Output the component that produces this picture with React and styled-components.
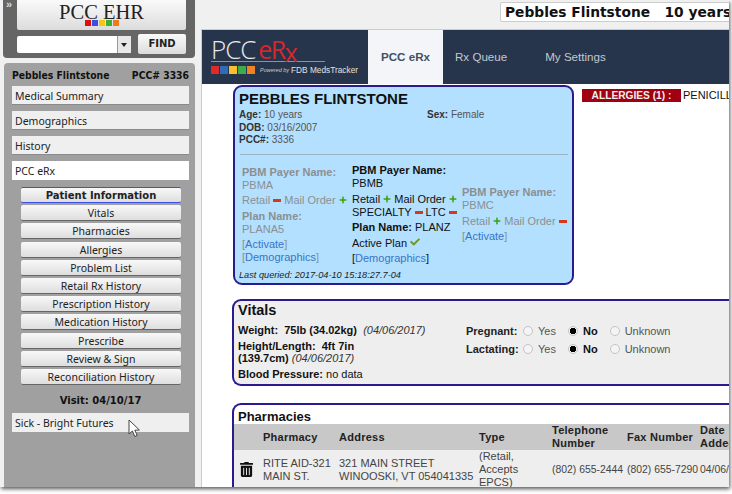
import React from 'react';
import styled, { createGlobalStyle } from 'styled-components';
import { FaTrashAlt, FaPlus, FaCheck } from 'react-icons/fa';

const GlobalStyle = createGlobalStyle`
  html, body { margin: 0; padding: 0; background: #fff; }
  body { width: 732px; height: 494px; overflow: hidden; font-family: "Liberation Sans", Arial, sans-serif; }
`;

const sideMenu = ['Medical Summary', 'Demographics', 'History', 'PCC eRx'];
const subMenu = ['Patient Information', 'Vitals', 'Pharmacies', 'Allergies', 'Problem List', 'Retail Rx History', 'Prescription History', 'Medication History', 'Prescribe', 'Review & Sign', 'Reconciliation History'];
const logoColors = ['#e01010', '#3a4fe0', '#f5c518', '#3cae3c', '#ee7a1c'];
const erxColors = ['#e02a26', '#2f6cb5', '#f7c12d', '#3dab49', '#ef8323'];

function Plus() {
  return <PlusIcon><FaPlus /></PlusIcon>;
}

function Sign({ on }) {
  return on ? <Plus /> : <Minus />;
}

function Radio({ label, checked }) {
  return (
    <RadioItem $checked={checked}>
      <RadioDot $checked={checked} />
      {label}
    </RadioItem>
  );
}

function Cursor() {
  return (
    <CursorMark width="13" height="19" viewBox="0 0 13 19">
      <path d="M1 1 L1 15 L4.4 12 L6.8 17.5 L9.2 16.4 L6.8 11.2 L11.4 11 Z" fill="#fff" stroke="#444" strokeWidth="1" />
    </CursorMark>
  );
}

export default function App() {
  return (
    <>
      <GlobalStyle />
      <Window>
        <Sidebar>
          <TopBox>
            <Chevrons>»</Chevrons>
            <LogoButton>
              PCC EHR
              <Squares>
                {logoColors.map((c) => <Square key={c} $color={c} $size={6} />)}
              </Squares>
            </LogoButton>
            <SearchRow>
              <SearchInput>
                <DropButton />
              </SearchInput>
              <FindButton>FIND</FindButton>
            </SearchRow>
          </TopBox>
          <Panel>
            <PanelHead>
              <span>Pebbles Flintstone</span>
              <span>PCC# 3336</span>
            </PanelHead>
            {sideMenu.map((m) => (
              <MenuItem key={m} $active={m === 'PCC eRx'}>{m}</MenuItem>
            ))}
            <SubMenu>
              {subMenu.map((m, i) => (
                <SubButton key={m} $active={i === 0}>{m}</SubButton>
              ))}
            </SubMenu>
            <VisitTitle>Visit: 04/10/17</VisitTitle>
            <VisitItem>
              Sick - Bright Futures
              <Cursor />
            </VisitItem>
          </Panel>
        </Sidebar>
        <Main>
          <TitleRow>
            <TitleBox>Pebbles Flintstone&nbsp;&nbsp;&nbsp;10 years</TitleBox>
          </TitleRow>
          <Frame>
            <Nav>
              <Brand>
                <BrandTop>PCC <BrandRed>eR<BrandX>x</BrandX></BrandRed></BrandTop>
                <BrandRule />
                <BrandBottom>
                  {erxColors.map((c) => <Square key={c} $color={c} $size={8} />)}
                  <Powered>Powered by</Powered>
                  <Fdb>FDB MedsTracker</Fdb>
                </BrandBottom>
              </Brand>
              <Tab $active>PCC eRx</Tab>
              <Tab>Rx Queue</Tab>
              <Tab>My Settings</Tab>
            </Nav>
            <Content>
              <TopRow>
                <PatientCard>
                  <PatientName>PEBBLES FLINTSTONE</PatientName>
                  <InfoGrid>
                    <div>
                      <InfoLine><b>Age:</b> 10 years</InfoLine>
                      <InfoLine><b>DOB:</b> 03/16/2007</InfoLine>
                      <InfoLine><b>PCC#:</b> 3336</InfoLine>
                    </div>
                    <InfoLine><b>Sex:</b> Female</InfoLine>
                  </InfoGrid>
                  <Rule />
                  <Payers>
                    <Payer $muted>
                      <PayerLine><b>PBM Payer Name:</b><br />PBMA</PayerLine>
                      <PayerLine>Retail <Sign /> Mail Order <Sign on /></PayerLine>
                      <PayerLine><b>Plan Name:</b><br />PLANA5</PayerLine>
                      <PayerLine>[<PayerLink>Activate</PayerLink>]<br />[<PayerLink>Demographics</PayerLink>]</PayerLine>
                    </Payer>
                    <Payer>
                      <PayerLine><b>PBM Payer Name:</b><br />PBMB</PayerLine>
                      <PayerLine>Retail <Sign on /> Mail Order <Sign on /><br />SPECIALTY <Sign /> LTC <Sign /></PayerLine>
                      <PayerLine><b>Plan Name:</b> PLANZ</PayerLine>
                      <PayerLine>Active Plan <CheckIcon><FaCheck /></CheckIcon></PayerLine>
                      <PayerLine>[<PayerLink>Demographics</PayerLink>]</PayerLine>
                    </Payer>
                    <Payer $muted>
                      <PayerLine><b>PBM Payer Name:</b><br />PBMC</PayerLine>
                      <PayerLine>Retail <Sign on /> Mail Order <Sign /></PayerLine>
                      <PayerLine>[<PayerLink>Activate</PayerLink>]</PayerLine>
                    </Payer>
                  </Payers>
                  <Queried>Last queried: 2017-04-10 15:18:27.7-04</Queried>
                </PatientCard>
                <AllergyRow>
                  <AllergyTag>ALLERGIES (1) :</AllergyTag>
                  <span>PENICILLIN</span>
                </AllergyRow>
              </TopRow>
              <VitalsCard>
                <CardTitle $size={14.5}>Vitals</CardTitle>
                <VitalsGrid>
                  <div>
                    <VitalLine><b>Weight:&nbsp; 75lb (34.02kg)</b> &nbsp;<i>(04/06/2017)</i></VitalLine>
                    <VitalLine><b>Height/Length:&nbsp; 4ft 7in<br />(139.7cm)</b> <i>(04/06/2017)</i></VitalLine>
                    <VitalLine><b>Blood Pressure:</b> no data</VitalLine>
                  </div>
                  <RadioColumn>
                    {['Pregnant:', 'Lactating:'].map((q) => (
                      <RadioRow key={q}>
                        <RadioLabel>{q}</RadioLabel>
                        <Radio label="Yes" />
                        <Radio label="No" checked />
                        <Radio label="Unknown" />
                      </RadioRow>
                    ))}
                  </RadioColumn>
                </VitalsGrid>
              </VitalsCard>
              <PharmacyCard>
                <CardTitle $size={13}>Pharmacies</CardTitle>
                <PharmacyTable>
                  <colgroup>
                    <col width="29" />
                    <col width="76" />
                    <col width="140" />
                    <col width="73" />
                    <col width="75" />
                    <col width="73" />
                    <col width="60" />
                  </colgroup>
                  <thead>
                    <tr>
                      <Th />
                      <Th>Pharmacy</Th>
                      <Th>Address</Th>
                      <Th>Type</Th>
                      <Th>Telephone Number</Th>
                      <Th>Fax Number</Th>
                      <Th>Date Added</Th>
                    </tr>
                  </thead>
                  <tbody>
                    <tr>
                      <Td><TrashIcon><FaTrashAlt /></TrashIcon></Td>
                      <Td>RITE AID-321<br />MAIN ST.</Td>
                      <Td>321 MAIN STREET<br />WINOOSKI, VT 054041335</Td>
                      <Td>(Retail,<br />Accepts<br />EPCS)</Td>
                      <Td $nowrap>(802) 655-2444</Td>
                      <Td $nowrap>(802) 655-7290</Td>
                      <Td $nowrap>04/06/2017</Td>
                    </tr>
                  </tbody>
                </PharmacyTable>
              </PharmacyCard>
            </Content>
          </Frame>
        </Main>
      </Window>
    </>
  );
}

const Window = styled.div`
  width: 729px;
  height: 487px;
  display: flex;
  overflow: hidden;
  background: #f0f0f0;
  box-shadow: 1px 2px 4px rgba(0, 0, 0, 0.65);
`;

const Sidebar = styled.div`
  width: 198px;
  flex: none;
  display: flex;
  flex-direction: column;
  padding: 0 3px;
  box-sizing: border-box;
  gap: 5px;
  background: #f0f0f0;
`;

const TopBox = styled.div`
  position: relative;
  height: 58px;
  flex: none;
  box-sizing: border-box;
  background: #666;
  border-radius: 0 0 4px 4px;
  padding: 0 9px 0 14px;
`;

const Chevrons = styled.span`
  position: absolute;
  left: 3px;
  top: 0;
  color: #ddd;
  font: bold 11px/9px "Liberation Sans", sans-serif;
`;

const LogoButton = styled.div`
  height: 30px;
  box-sizing: border-box;
  padding-top: 4px;
  background: linear-gradient(#fafafa, #dcdcdc);
  border-radius: 0 0 2px 2px;
  text-align: center;
  font: 20.5px/16px "Liberation Serif", serif;
  color: #222;
`;

const Squares = styled.div`
  display: flex;
  justify-content: center;
`;

const Square = styled.span`
  width: ${(p) => p.$size}px;
  height: ${(p) => p.$size}px;
  background: ${(p) => p.$color};
  flex: none;
  & + & { margin-left: ${(p) => (p.$size > 6 ? 1 : 0)}px; }
`;

const SearchRow = styled.div`
  display: flex;
  align-items: center;
  justify-content: space-between;
  margin-top: 4px;
`;

const SearchInput = styled.div`
  width: 114px;
  height: 17px;
  display: flex;
  justify-content: flex-end;
  background: #fff;
  border-radius: 2px;
`;

const DropButton = styled.div`
  width: 13px;
  background: #e8e8e8;
  border-left: 1px solid #999;
  position: relative;
  &::after {
    content: '';
    position: absolute;
    left: 3px;
    top: 7px;
    border: 3.5px solid transparent;
    border-top: 4px solid #222;
    border-bottom: 0;
  }
`;

const FindButton = styled.div`
  width: 48px;
  height: 20px;
  background: linear-gradient(#fafafa, #dcdcdc);
  border-radius: 2px;
  text-align: center;
  font: bold 10px/20px "DejaVu Sans", sans-serif;
  color: #222;
`;

const Panel = styled.div`
  flex: 1;
  margin: 0 0 0 1px;
  padding: 6px 6px 0 8px;
  background: #a0a0a0;
  border-radius: 4px 4px 0 0;
`;

const PanelHead = styled.div`
  display: flex;
  justify-content: space-between;
  box-sizing: border-box;
  height: 17px;
  font: bold 10.3px/13px "DejaVu Sans Condensed", "DejaVu Sans", sans-serif;
  color: #111;
`;

const MenuItem = styled.div`
  height: 19px;
  margin-bottom: 6px;
  padding-left: 3px;
  box-sizing: border-box;
  background: ${(p) => (p.$active ? '#fff' : '#efefef')};
  border-bottom: ${(p) => (p.$active ? '0' : '1px solid #8a8a8a')};
  font: 10.5px/21px "Noto Sans", sans-serif;
  color: #222;
`;

const SubMenu = styled.div`
  display: flex;
  flex-direction: column;
  gap: 2.2px;
  padding: 1px 8px 0 9px;
`;

const SubButton = styled.div`
  height: 16px;
  box-sizing: border-box;
  text-align: center;
  background: linear-gradient(#f8f8f8, #dedede);
  border-radius: 2px;
  font: ${(p) => (p.$active ? 'bold 10px/15px "DejaVu Sans"' : '10.5px/17px "Noto Sans"')}, sans-serif;
  color: #222;
  border-top: ${(p) => (p.$active ? '1px solid #3b4fe0' : '0')};
  border-bottom: 1px solid ${(p) => (p.$active ? '#3b4fe0' : '#666')};
`;

const VisitTitle = styled.div`
  margin-top: 9px;
  text-align: center;
  font: bold 10px/14px "DejaVu Sans", sans-serif;
  color: #111;
`;

const VisitItem = styled.div`
  position: relative;
  height: 19px;
  margin-top: 5px;
  padding-left: 3px;
  background: #efefef;
  font: 10.5px/21px "Noto Sans", sans-serif;
  color: #222;
`;

const CursorMark = styled.svg`
  position: absolute;
  left: 116px;
  top: 6px;
`;

const Main = styled.div`
  flex: 1;
  min-width: 0;
  display: flex;
  flex-direction: column;
  overflow: hidden;
`;

const TitleRow = styled.div`
  height: 29px;
  flex: none;
  padding: 2px 0 0 302px;
  box-sizing: border-box;
`;

const TitleBox = styled.div`
  height: 20px;
  width: 260px;
  padding-left: 4px;
  box-sizing: border-box;
  background: #fff;
  border: 1px solid #ccc;
  border-radius: 2px;
  font: bold 13.8px/18px "DejaVu Sans", sans-serif;
  color: #111;
  white-space: nowrap;
`;

const Frame = styled.div`
  flex: 1;
  min-height: 0;
  margin-left: 3px;
  border-top: 1px solid #ccc;
  border-left: 1px solid #ccc;
  background: #fff;
`;

const Nav = styled.div`
  height: 54px;
  display: flex;
  background: #26354b;
`;

const Brand = styled.div`
  width: 166px;
  flex: none;
  box-sizing: border-box;
  padding: 8px 0 0 9px;
  color: #fff;
`;

const BrandTop = styled.div`
  height: 23px;
  font: 300 26px/22px "Open Sans", sans-serif;
  letter-spacing: -1px;
  word-spacing: -3px;
  color: #e8e8e8;
  white-space: nowrap;
`;

const BrandRed = styled.span`
  color: #d5282c;
  font-size: 25px;
  font-weight: 400;
  letter-spacing: -1.5px;
`;

const BrandX = styled.span`
  position: relative;
  top: 3px;
`;

const BrandRule = styled.div`
  width: 114px;
  height: 1px;
  background: #8a93a0;
`;

const BrandBottom = styled.div`
  display: flex;
  align-items: center;
  margin-top: 3px;
`;

const Powered = styled.span`
  margin: 0 2px 0 5px;
  font: italic 5.5px "Liberation Sans", sans-serif;
  color: #c8ccd2;
  white-space: nowrap;
`;

const Fdb = styled.span`
  font: 8.3px "Liberation Sans", sans-serif;
  color: #e2e2e2;
  white-space: nowrap;
`;

const Tab = styled.div`
  width: ${(p) => (p.$active ? '75px' : 'auto')};
  padding: ${(p) => (p.$active ? '0' : '0 26px 0 12px')};
  text-align: center;
  background: ${(p) => (p.$active ? '#f4f5f8' : 'transparent')};
  color: ${(p) => (p.$active ? '#3f5064' : '#c2c9d2')};
  font: ${(p) => (p.$active ? 'bold' : 'normal')} 11.6px/54px "Liberation Sans", sans-serif;
  white-space: nowrap;
`;

const Content = styled.div`
  padding: 1px 0 0 30px;
  font-size: 11px;
`;

const TopRow = styled.div`
  display: flex;
  align-items: flex-start;
  gap: 8px;
  margin-left: 1px;
`;

const PatientCard = styled.div`
  width: 341px;
  height: 200px;
  flex: none;
  box-sizing: border-box;
  padding: 3px 4px 0 4px;
  background: #b3e0ff;
  border: 2px solid #2a1a8f;
  border-radius: 9px;
`;

const PatientName = styled.div`
  font: bold 15px/17px "Liberation Sans", sans-serif;
  color: #111;
`;

const InfoGrid = styled.div`
  display: grid;
  grid-template-columns: 188px 1fr;
  margin-top: 2px;
`;

const InfoLine = styled.div`
  font: 10px/12.5px "Liberation Sans", sans-serif;
  color: #555;
  b { color: #333; }
`;

const Rule = styled.div`
  height: 1px;
  margin: 7px 0 0 1px;
  background: #9db4c4;
`;

const Payers = styled.div`
  display: flex;
  align-items: center;
  height: 105px;
  padding-left: 3px;
  margin-top: 9px;
`;

const Payer = styled.div`
  width: 110px;
  flex: none;
  color: ${(p) => (p.$muted ? '#8b8f92' : '#111')};
  font: 11px/13px "Liberation Sans", sans-serif;
  white-space: nowrap;
`;

const PayerLine = styled.div`
  margin-bottom: 2.5px;
`;

const PayerLink = styled.span`
  color: #3a74c4;
`;

const PlusIcon = styled.span`
  display: inline-block;
  color: #3aa00e;
  font-size: 8px;
  line-height: 8px;
`;

const Minus = styled.span`
  display: inline-block;
  width: 8px;
  height: 3px;
  vertical-align: 2px;
  background: #d33a1c;
`;

const CheckIcon = styled.span`
  color: #6f9a26;
  font-size: 10px;
  line-height: 10px;
`;

const Queried = styled.div`
  font: italic 9.2px/12px "Liberation Sans", sans-serif;
  color: #222;
`;

const AllergyRow = styled.div`
  display: flex;
  gap: 2px;
  margin-top: 4px;
  font: 11px/13px "Liberation Sans", sans-serif;
  color: #111;
  white-space: nowrap;
`;

const AllergyTag = styled.span`
  width: 99px;
  flex: none;
  text-align: center;
  background: #a00010;
  color: #eee;
  font-size: 10.2px;
  font-weight: bold;
`;

const VitalsCard = styled.div`
  width: 520px;
  height: 87px;
  margin: 14px 0 0 0;
  box-sizing: border-box;
  padding: 2px 4px;
  background: #eee;
  border: 2px solid #2a1a8f;
  border-right: 0;
  border-radius: 9px 0 0 9px;
`;

const CardTitle = styled.div`
  font: bold ${(p) => p.$size}px/15px "Liberation Sans", sans-serif;
  color: #111;
`;

const VitalsGrid = styled.div`
  display: grid;
  grid-template-columns: 228px 1fr;
  margin-top: 6px;
`;

const VitalLine = styled.div`
  font: 11px/12px "Liberation Sans", sans-serif;
  color: #111;
  margin-bottom: 4px;
  width: 210px;
  white-space: nowrap;
  i { color: #333; }
`;

const RadioColumn = styled.div`
  margin-top: -2px;
`;

const RadioRow = styled.div`
  display: flex;
  align-items: center;
  height: 18px;
  font: 11px "Liberation Sans", sans-serif;
`;

const RadioLabel = styled.span`
  width: 57px;
  font-weight: bold;
  color: #222;
`;

const RadioItem = styled.span`
  display: inline-flex;
  align-items: center;
  gap: 5px;
  margin-right: 12px;
  color: ${(p) => (p.$checked ? '#111' : '#555')};
  font-weight: ${(p) => (p.$checked ? 'bold' : 'normal')};
`;

const RadioDot = styled.span`
  width: 10px;
  height: 10px;
  box-sizing: border-box;
  border-radius: 50%;
  background: ${(p) => (p.$checked ? 'radial-gradient(circle, #000 0 3px, #f4f4f4 3.5px)' : '#f4f4f4')};
  border: 1px solid #c4c4c4;
`;

const PharmacyCard = styled.div`
  width: 520px;
  margin: 17px 0 0 0;
  box-sizing: border-box;
  padding: 4px 0 0;
  border: 2px solid #2a1a8f;
  border-right: 0;
  border-bottom: 0;
  border-radius: 9px 0 0 0;
  > div:first-child { padding-left: 4px; }
`;

const PharmacyTable = styled.table`
  width: 526px;
  table-layout: fixed;
  border-collapse: collapse;
`;

const Th = styled.th`
  height: 26px;
  padding: 0;
  background: #c8c8c8;
  text-align: left;
  font: bold 11px/13px "Liberation Sans", sans-serif;
  letter-spacing: 0.25px;
  color: #222;
`;

const Td = styled.td`
  height: 38px;
  padding: 0;
  background: #eee;
  vertical-align: middle;
  font: ${(p) => (p.$nowrap ? '10.4px' : '11px')}/13px "Liberation Sans", sans-serif;
  color: #444;
  white-space: ${(p) => (p.$nowrap ? 'nowrap' : 'normal')};
`;

const TrashIcon = styled.span`
  display: flex;
  justify-content: center;
  padding-right: 4px;
  color: #111;
  font-size: 15px;
`;
